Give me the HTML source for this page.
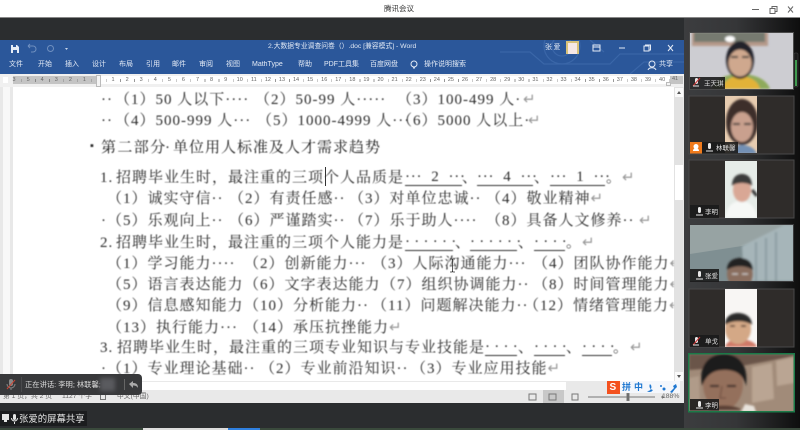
<!DOCTYPE html>
<html lang="zh"><head><meta charset="utf-8">
<style>
html,body{margin:0;padding:0;width:800px;height:430px;overflow:hidden;background:#fff}
body{position:relative;font-family:"Liberation Sans","Noto Sans CJK SC",sans-serif}
.a{position:absolute}
.t{position:absolute;white-space:nowrap;line-height:1}
#doc{position:absolute;left:0;top:0;width:674px;height:381px;overflow:hidden;filter:blur(.4px)}
#doc .t{font-family:"Liberation Serif","Noto Serif CJK SC",serif;font-size:15px;letter-spacing:1px;color:#2c2c2c}
#doc .u{text-align:center;height:15px;border-bottom:1px solid #333;letter-spacing:.75px}
#doc .v{letter-spacing:.25px}
#doc i{font-style:normal;color:#999}
.m{font-size:7px;color:#e4ebf6;top:61px;filter:blur(.25px)}
.rn{position:absolute;top:77px;display:flex;font-size:5.500px;color:#666;line-height:7px;filter:blur(.25px)}
.rn span{width:14.090px;text-align:center;flex:none}
</style></head><body>
<!-- title bar -->
<div class="a" style="left:0;top:0;width:800px;height:17px;background:#fff;border-bottom:1px solid #888"></div>
<div class="t" style="left:384px;top:5px;font-size:7.500px;color:#333;filter:blur(.25px)">腾讯会议</div>
<svg class="a" style="left:740px;top:3px" width="60" height="13" fill="none" stroke="#666" stroke-width="1"><path d="M12 6.500H19"/><path d="M30 5.500h5v5h-5zM32 5.500V3.500h5v5h-2"/><path d="M48 3.500l5 6M53 3.500l-5 6"/></svg>
<!-- dark -->
<div class="a" style="left:0;top:18px;width:684px;height:22px;background:#2b2d2f"></div>
<!-- word ribbon -->
<div class="a" style="left:0;top:40px;width:684px;height:34px;background:#2b579a"></div>
<svg class="a" style="left:500px;top:40px" width="184" height="34" fill="none" stroke="#3a66a8" stroke-width="1.200"><circle cx="62" cy="6" r="10"/><circle cx="62" cy="6" r="18"/><path d="M0 12H30L44 24H110L120 14H184M90 0l14 12M130 34l14-12H184"/></svg>
<svg class="a" style="left:10px;top:42px" width="60" height="14" fill="none"><path d="M1 3h6l2 2v6H1z" fill="#e6edf7"/><rect x="3" y="3" width="3" height="2" fill="#2b579a"/><rect x="3" y="8" width="4" height="3" fill="#2b579a"/><path d="M18 4h5a3 3 0 0 1 0 6h-2M18 4l2-2M18 4l2 2" stroke="#6f8fbf"/><circle cx="40.500" cy="6.500" r="3" stroke="#6f8fbf"/><path d="M55 6h3l-1.500 2z" fill="#c8d5ea"/></svg>
<div class="t" style="left:268px;top:44px;font-size:6.800px;color:#dfe7f3;filter:blur(.25px)">2.大数据专业调查问卷（）.doc [兼容模式] - Word</div>
<div class="t" style="left:545px;top:44px;font-size:7px;letter-spacing:1.500px;color:#dfe7f3;filter:blur(.25px)">张爱</div>
<div class="a" style="left:566px;top:41px;width:13px;height:13px;background:#d8c27a"><div class="a" style="left:2px;top:2px;width:9px;height:11px;background:#f6e8e6"></div></div>
<svg class="a" style="left:590px;top:42px" width="90" height="12" fill="none" stroke="#e4ebf6"><path d="M3 3h7v6H3zM3 5h7"/><path d="M29 6h6"/><path d="M54 4h5v5h-5zM55.500 4V3h5v5h-1"/><path d="M78 3l5 6M83 3l-5 6"/></svg>
<div class="t m" style="left:9px">文件</div><div class="t m" style="left:38px">开始</div><div class="t m" style="left:65px">插入</div><div class="t m" style="left:92px">设计</div><div class="t m" style="left:119px">布局</div><div class="t m" style="left:146px">引用</div><div class="t m" style="left:172px">邮件</div><div class="t m" style="left:199px">审阅</div><div class="t m" style="left:226px">视图</div><div class="t m" style="left:252px">MathType</div><div class="t m" style="left:298px">帮助</div><div class="t m" style="left:324px">PDF工具集</div><div class="t m" style="left:370px">百度网盘</div><div class="t m" style="left:424px">操作说明搜索</div><div class="t m" style="left:659px">共享</div>
<svg class="a" style="left:410px;top:60px" width="10" height="11" fill="none" stroke="#e4ebf6"><circle cx="4" cy="4" r="3"/><path d="M3 8h2"/></svg>
<svg class="a" style="left:647px;top:60px" width="11" height="11" fill="none" stroke="#e4ebf6"><circle cx="5" cy="4" r="3"/><path d="M1 10c1-3 7-3 8 0"/></svg>
<!-- ruler -->
<div class="a" style="left:0;top:74px;width:684px;height:13px;background:#f0f0f0"></div>
<div class="a" style="left:3px;top:77px;width:5px;height:6px;background:#fff"></div>
<div class="a" style="left:13px;top:76px;width:86px;height:8px;background:#c4c4c4"></div>
<div class="a" style="left:99px;top:76px;width:571px;height:8px;background:#fff"></div>
<div class="a" style="left:670px;top:76px;width:13px;height:8px;background:#c4c4c4"></div>
<div class="a" style="left:21px;top:79px;width:78px;height:3px;background:repeating-linear-gradient(90deg,#888 0 .7px,transparent .7px 14.090px)"></div>
<div class="a" style="left:106px;top:79px;width:564px;height:3px;background:repeating-linear-gradient(90deg,#999 0 .7px,transparent .7px 14.090px)"></div>
<div class="rn" style="left:7px"><span>3</span><span>5</span><span>4</span><span>3</span><span>2</span><span>1</span></div>
<div class="rn" style="left:106px"><span>1</span><span>2</span><span>3</span><span>4</span><span>5</span><span>6</span><span>7</span><span>8</span><span>9</span><span>10</span><span>11</span><span>12</span><span>13</span><span>14</span><span>15</span><span>16</span><span>17</span><span>18</span><span>19</span><span>20</span><span>21</span><span>22</span><span>23</span><span>24</span><span>25</span><span>26</span><span>27</span><span>28</span><span>29</span><span>30</span><span>31</span><span>32</span><span>33</span><span>34</span><span>35</span><span>36</span><span>37</span><span>38</span><span>39</span><span>40</span></div>
<div class="t" style="left:672px;top:77px;font-size:5.500px;color:#666">41</div>
<div class="a" style="left:96px;top:75px;width:5px;height:12px;background:#f4f4f4;border:1px solid #bbb;box-sizing:border-box"></div>
<div class="a" style="left:666px;top:82px;width:5px;height:4px;background:#f4f4f4;border:1px solid #bbb;box-sizing:border-box"></div>
<!-- doc -->
<div class="a" style="left:0;top:87px;width:684px;height:294px;background:#e8e8e8"></div>
<div class="a" style="left:13px;top:87px;width:661px;height:294px;background:#fff"></div>
<div class="a" style="left:3px;top:87px;width:7px;height:294px;background:#f8f8f8"></div>
<div class="a" style="left:674px;top:87px;width:9px;height:294px;background:#e2e2e2"></div>
<div class="a" style="left:675px;top:88px;width:8px;height:9px;background:#fafafa"></div>
<div class="a" style="left:676.500px;top:91px;width:0;height:0;border:2.500px solid transparent;border-bottom:3px solid #555;border-top:0"></div>
<div class="a" style="left:675px;top:165px;width:8px;height:35px;background:#fff"></div>
<div class="a" style="left:675px;top:372px;width:8px;height:9px;background:#fafafa"></div>
<div class="a" style="left:676.500px;top:375px;width:0;height:0;border:2.500px solid transparent;border-top:3px solid #555;border-bottom:0"></div>
<div id="doc">
<!-- L1 -->
<div class="t" style="left:101px;top:93px">··</div><div class="t" style="left:115px;top:93px">（1）50 人以下····</div><div class="t" style="left:255px;top:93px">（2）50-99 人·····</div><div class="t" style="left:397px;top:93px">（3）100-499 人·</div><div class="t" style="left:523px;top:93px"><i>↵</i></div>
<!-- L2 -->
<div class="t" style="left:101px;top:114px">··</div><div class="t" style="left:115px;top:114px">（4）500-999 人···</div><div class="t" style="left:257px;top:114px">（5）1000-4999 人···</div><div class="t" style="left:397px;top:114px">（6）5000 人以上·</div><div class="t" style="left:528px;top:114px"><i>↵</i></div>
<!-- L3 -->
<div class="t" style="left:90px;top:141px;font-size:11px">▪</div><div class="t" style="left:101px;top:141px;letter-spacing:1.400px;color:#1c1c1c">第二部分</div><div class="t" style="left:165px;top:141px">·</div><div class="t" style="left:173px;top:141px;color:#1c1c1c">单位用人标准及人才需求趋势</div>
<!-- L4 -->
<div class="t" style="left:100px;top:171px">1.</div><div class="t" style="left:116px;top:171px">招聘毕业生时，最注重的三项个人品质是</div>
<div class="t u" style="left:405px;top:170px;width:57px">···&nbsp;&nbsp;2&nbsp;&nbsp;···</div><div class="t" style="left:462px;top:171px">、</div>
<div class="t u" style="left:477px;top:170px;width:56px">···&nbsp;&nbsp;4&nbsp;&nbsp;···</div><div class="t" style="left:534px;top:171px">、</div>
<div class="t u" style="left:550px;top:170px;width:55px">···&nbsp;&nbsp;1&nbsp;&nbsp;···</div><div class="t" style="left:606px;top:171px">。</div><div class="t" style="left:622px;top:171px"><i>↵</i></div>
<!-- L5 -->
<div class="t" style="left:107px;top:192px">（1）诚实守信··</div><div class="t" style="left:229px;top:192px">（2）有责任感··</div><div class="t" style="left:349px;top:192px">（3）对单位忠诚··</div><div class="t" style="left:486px;top:192px">（4）敬业精神<i>↵</i></div>
<!-- L6 -->
<div class="t" style="left:101px;top:214px">·</div><div class="t" style="left:107px;top:214px">（5）乐观向上··</div><div class="t" style="left:229px;top:214px">（6）严谨踏实··</div><div class="t" style="left:349px;top:214px">（7）乐于助人····</div><div class="t" style="left:486px;top:214px">（8）具备人文修养··</div><div class="t" style="left:639px;top:214px"><i>↵</i></div>
<!-- L7 -->
<div class="t" style="left:100px;top:236px">2.</div><div class="t" style="left:116px;top:236px">招聘毕业生时，最注重的三项个人能力是</div>
<div class="t u v" style="left:405px;top:235px;width:48px">· · · · · ·</div><div class="t" style="left:455px;top:236px">、</div>
<div class="t u v" style="left:470px;top:235px;width:47px">· · · · · ·</div><div class="t" style="left:518px;top:236px">、</div>
<div class="t u v" style="left:534px;top:235px;width:31px">· · · ·</div><div class="t" style="left:566px;top:236px">。</div><div class="t" style="left:582px;top:236px"><i>↵</i></div>
<!-- L8 -->
<div class="t" style="left:107px;top:257px">（1）学习能力····</div><div class="t" style="left:244px;top:257px">（2）创新能力···</div><div class="t" style="left:372px;top:257px">（3）人际沟通能力···</div><div class="t" style="left:533px;top:257px">（4）团队协作能力<i>↵</i></div>
<!-- L9 -->
<div class="t" style="left:107px;top:278px">（5）语言表达能力</div><div class="t" style="left:244px;top:278px">（6）文字表达能力</div><div class="t" style="left:381px;top:278px">（7）组织协调能力··</div><div class="t" style="left:533px;top:278px">（8）时间管理能力<i>↵</i></div>
<!-- L10 -->
<div class="t" style="left:107px;top:299px">（9）信息感知能力</div><div class="t" style="left:244px;top:299px">（10）分析能力··</div><div class="t" style="left:372px;top:299px">（11）问题解决能力··</div><div class="t" style="left:524px;top:299px">（12）情绪管理能力<i>↵</i></div>
<!-- L11 -->
<div class="t" style="left:107px;top:321px">（13）执行能力···</div><div class="t" style="left:244px;top:321px">（14）承压抗挫能力<i>↵</i></div>
<!-- L12 -->
<div class="t" style="left:100px;top:341px">3.</div><div class="t" style="left:117px;top:341px">招聘毕业生时，最注重的三项专业知识与专业技能是</div>
<div class="t u v" style="left:485px;top:340px;width:32px">· · · ·</div><div class="t" style="left:518px;top:341px">、</div>
<div class="t u v" style="left:534px;top:340px;width:31px">· · · ·</div><div class="t" style="left:566px;top:341px">、</div>
<div class="t u v" style="left:582px;top:340px;width:30px">· · · ·</div><div class="t" style="left:613px;top:341px">。</div><div class="t" style="left:630px;top:341px"><i>↵</i></div>
<!-- L13 -->
<div class="t" style="left:101px;top:362px">·</div><div class="t" style="left:107px;top:362px">（1）专业理论基础··</div><div class="t" style="left:260px;top:362px">（2）专业前沿知识··</div><div class="t" style="left:411px;top:362px">（3）专业应用技能<i>↵</i></div>
</div>
<div class="a" style="left:325px;top:167px;width:1px;height:19px;background:#333"></div>
<!-- I-beam -->
<svg class="a" style="left:449px;top:258px" width="7" height="15" fill="none" stroke="#333" stroke-width=".8"><path d="M1 1h2l.5 1 .5-1h2M3.500 2v11M1 14h2l.5-1 .5 1h2"/></svg>
<!-- status -->
<div class="a" style="left:0;top:381px;width:684px;height:22px;background:#e9e9e9"></div>
<div class="a" style="left:13px;top:382px;width:553px;height:8px;background:#fff"></div>
<div class="t" style="left:3px;top:394px;font-size:6.800px;color:#666;filter:blur(.3px)">第 1 页，共 2 页</div><div class="t" style="left:62px;top:394px;font-size:6.800px;color:#666;filter:blur(.3px)">1127 个字</div><div class="t" style="left:117px;top:394px;font-size:6.800px;color:#666;filter:blur(.3px)">中文(中国)</div>
<div class="a" style="left:100px;top:394px;width:6px;height:6px;border:1px solid #777;box-sizing:border-box"></div>
<div class="a" style="left:543px;top:390px;width:21px;height:13px;background:#c8c8c8"></div>
<svg class="a" style="left:528px;top:392px" width="150" height="10" fill="none" stroke="#777"><rect x="1" y="2" width="7" height="6"/><rect x="21" y="2" width="7" height="6"/><rect x="44" y="2" width="6" height="6"/><path d="M60 5H127M133 5h3M134.500 3.500v3"/><rect x="99" y="1.500" width="2" height="7" fill="#666"/></svg>
<div class="t" style="left:662px;top:394px;font-size:6.800px;color:#666">188%</div>
<!-- sogou bar -->
<div class="a" style="left:607px;top:381px;width:73px;height:12px;background:#f4f7fc"></div>
<div class="a" style="left:607px;top:381px;width:13px;height:13px;background:#f4511e"><span class="t" style="left:2.500px;top:1.500px;font-size:10px;font-weight:bold;color:#fff">S</span></div>
<div class="t" style="left:622px;top:383px;font-size:9px;font-weight:bold;color:#1f78d1;letter-spacing:3px">拼中</div>
<svg class="a" style="left:645px;top:383px" width="38" height="10" fill="#1f78d1"><path d="M5 1a4 4 0 0 1-3 7 4 4 0 0 0 6-1 4 4 0 0 1-3-6z"/><circle cx="16" cy="3" r="1"/><circle cx="19" cy="6" r="1.500"/><path d="M25 9l4-4-1-2 3-2 1 3-2 2-3 4z"/></svg>
<!-- bottom dark -->
<div class="a" style="left:0;top:403px;width:684px;height:25px;background:#2b2d2f"></div>
<div class="a" style="left:0;top:428px;width:800px;height:2px;background:#3a4a3c"></div>
<div class="a" style="left:143px;top:428px;width:85px;height:2px;background:#ddd"></div>
<div class="a" style="left:228px;top:428px;width:32px;height:2px;background:#2f80e0"></div>
<!-- speaker toast -->
<div class="a" style="left:0;top:374px;width:142px;height:21px;background:#38393b;border-radius:0 4px 4px 0"></div>
<svg class="a" style="left:4px;top:378px" width="14" height="13" fill="none"><rect x="5" y="1" width="4" height="7" rx="2" fill="#888"/><path d="M3 6a4 4 0 0 0 8 0M7 10v2" stroke="#888"/><path d="M3 11L11 2" stroke="#c43"/></svg>
<div class="a" style="left:21px;top:377px;width:1px;height:15px;background:#4a4b4d"></div>
<div class="t" style="left:25px;top:381px;font-size:7.300px;color:#ddd;filter:blur(.25px)">正在讲话: 李明; 林联馨;</div>
<div class="a" style="left:100px;top:378px;width:15px;height:13px;background:#5a5b5f;filter:blur(2px)"></div>
<div class="a" style="left:124px;top:379px;width:1px;height:11px;background:#666"></div>
<svg class="a" style="left:128px;top:380px" width="11" height="9" fill="#aaa"><path d="M1 4l4-3v2c3 0 5 1 5 5-1-2-3-2.500-5-2.500V8z"/></svg>
<!-- screen share label -->
<div class="a" style="left:0;top:411px;width:87px;height:15px;background:#1b1c1e"></div>
<svg class="a" style="left:1px;top:413px" width="18" height="12" fill="#e6e6e6"><path d="M1 1h7v6H6v2H3V7H1z"/><rect x="12" y="1" width="3" height="6" rx="1.500"/><path d="M10 5a3.500 3.500 0 0 0 7 0h-1a2.500 2.500 0 0 1-5 0zM13 9h1v2h-1z"/></svg>
<div class="t" style="left:19px;top:414px;font-size:9.400px;color:#e6e6e6;filter:blur(.2px)">张爱的屏幕共享</div>
<!-- right panel -->
<div class="a" style="left:684px;top:18px;width:116px;height:410px;background:linear-gradient(90deg,#3c3d3f 0%,#353638 45%,#0e0e0e 100%)"></div>
<svg class="a" style="left:684px;top:18px" width="116" height="410">
<defs><filter id="b"><feGaussianBlur stdDeviation="1"/></filter><clipPath id="c6"><rect x="5" y="336" width="105" height="57"/></clipPath><clipPath id="c4"><rect x="6" y="207" width="103" height="56"/></clipPath><clipPath id="c1"><rect x="6" y="15" width="103" height="56"/></clipPath><clipPath id="c2"><rect x="41" y="78" width="32" height="57"/></clipPath><clipPath id="c3"><rect x="41" y="143" width="32" height="57"/></clipPath><clipPath id="c5"><rect x="41" y="271" width="32" height="58"/></clipPath></defs>
<rect x="110" y="35" width="4" height="34" rx="1" fill="#1a1a1a" stroke="#444" stroke-width=".5"/><rect x="111" y="42" width="2" height="26" fill="#3f9a4f"/>
<!-- tile 1 -->
<rect x="5" y="14" width="105" height="58" fill="#4a4a4a"/>
<g clip-path="url(#c1)"><rect x="6" y="15" width="103" height="56" fill="#cdcdd2"/>
<g filter="url(#b)"><rect x="8" y="14" width="76" height="14" fill="#b5998a"/><rect x="10" y="14" width="71" height="10" fill="#767a70"/><ellipse cx="46" cy="21" rx="5" ry="3" fill="#fff"/>
<path d="M28 71c4-11 15-15 28-15s26 4 30 15z" fill="#8eaa5c"/><path d="M38 71c2-9 10-13 18-13s18 4 20 13z" fill="#e2b238"/>
<ellipse cx="56" cy="42" rx="14" ry="19" fill="#24242a"/><ellipse cx="56" cy="45" rx="11.500" ry="13.500" fill="#cfa88e"/><path d="M47 39h7M58 39h7" stroke="#3b3b38" stroke-width="2"/></g></g>
<!-- tile 2 -->
<rect x="5" y="78" width="105" height="58" fill="#2f2c2a" stroke="#494949"/>
<g clip-path="url(#c2)"><rect x="41" y="78" width="32" height="58" fill="#e7ccb0"/>
<g filter="url(#b)"><ellipse cx="58" cy="104" rx="16" ry="23" fill="#3e2f2a"/><ellipse cx="58" cy="109" rx="11" ry="15" fill="#c9a08e"/><path d="M49 106h7M60 106h7" stroke="#333" stroke-width="2"/><path d="M46 136c2-8 8-9 13-9s12 3 14 9z" fill="#7390b4"/></g></g>
<!-- tile 3 -->
<rect x="5" y="142" width="105" height="58" fill="#2f2c2a" stroke="#494949"/>
<g clip-path="url(#c3)"><rect x="41" y="143" width="32" height="57" fill="#e6ece8"/>
<g filter="url(#b)"><path d="M41 200c2-14 10-17 16-17s14 3 16 17z" fill="#f6f8f6"/><ellipse cx="58" cy="172" rx="9" ry="12" fill="#d9a795"/><path d="M48 168c0-9 5-12 10-12s10 3 10 12c-4-4-16-4-20 0z" fill="#3a3a3a"/><path d="M68 172l5 6" stroke="#333" stroke-width="3"/></g></g>
<!-- tile 4 -->
<rect x="5" y="206" width="105" height="58" fill="#3a3a3c"/>
<g clip-path="url(#c4)"><rect x="6" y="207" width="103" height="56" fill="#7f8f92"/><path d="M6 207h103v8L58 228l-52 8z" fill="#97a3a3"/><g filter="url(#b)"><path d="M58 228L100 207h10v56H60z" fill="#a6b5b9"/><path d="M72 224v39M82 220v43M92 214v49" stroke="#8b9ba0" stroke-width="2"/><ellipse cx="56" cy="256" rx="13" ry="15" fill="#8a6e5f"/><path d="M43 252c0-9 7-12 13-12s13 3 13 12c-7-5-19-5-26 0z" fill="#222"/><path d="M48 256h6M58 256h6" stroke="#ddd"/></g></g>
<!-- tile 5 -->
<rect x="5" y="271" width="105" height="58" fill="#2f2c2a" stroke="#494949"/>
<g clip-path="url(#c5)"><rect x="41" y="271" width="32" height="58" fill="#f8f6f4"/>
<g filter="url(#b)"><path d="M41 329c2-6 8-8 14-8s16 2 18 8z" fill="#d07a68"/><ellipse cx="54" cy="311" rx="13" ry="15" fill="#d4a886"/><path d="M41 307c0-9 7-12 13-12s14 3 14 12c-6-5-21-5-27 0z" fill="#2a2a2a"/><path d="M46 308h5M57 308h5" stroke="#3a2a20" stroke-width="1.500"/></g></g>
<!-- tile 6 -->
<g clip-path="url(#c6)"><rect x="5" y="336" width="105" height="57" fill="#a18b79"/><g filter="url(#b)"><path d="M5 336h105v2L58 348 5 352z" fill="#6a5548"/><path d="M68 349l20-4 2 36-22 4zM92 343l18-4v26l-17 3z" fill="#baa593"/><path d="M5 360l10-2 1 30-11 2z" fill="#b09b89"/><ellipse cx="39" cy="366" rx="20" ry="26" fill="#94705c"/><path d="M18 368c-4-22 8-32 22-32s25 10 22 32c-3-12-10-16-22-16s-18 6-22 16z" fill="#1e1c1c"/><path d="M26 368h9M43 368h9" stroke="#2a2222" stroke-width="2"/><path d="M38 368l-2 12h6" stroke="#6a4a3c" fill="none"/><path d="M25 392c3-6 25-6 33 0z" fill="#5a4036"/><path d="M57 394l4-8 9 2 2 6z" fill="#e9e4dd"/></g></g>
<rect x="4.750" y="335.750" width="105.500" height="58" fill="none" stroke="#1b7a48" stroke-width="1.500"/>
<!-- labels -->
<rect x="6" y="59" width="35" height="12" fill="#1b1b1b" opacity=".9"/>
<rect x="6" y="124" width="12" height="11.500" fill="#ef7a1c"/><path d="M9 133c0-4 6-4 6 0zM12 126a2.500 2.500 0 1 1-.01 0z" fill="#fff"/>
<rect x="18" y="124" width="36" height="11.500" fill="#1b1b1b" opacity=".9"/>
<rect x="6" y="187" width="29" height="13" fill="#1b1b1b" opacity=".9"/>
<rect x="6" y="251" width="29" height="13" fill="#1b1b1b" opacity=".9"/>
<rect x="6" y="317" width="29" height="12" fill="#1b1b1b" opacity=".9"/>
<rect x="6" y="381" width="29" height="11.500" fill="#1b1b1b" opacity=".9"/>
<g fill="#e8e8e8"><rect x="11" y="60" width="3" height="6" rx="1.500"/><rect x="24" y="125" width="3" height="6" rx="1.500"/><rect x="14" y="189" width="3" height="6" rx="1.500"/><rect x="14" y="253" width="3" height="6" rx="1.500"/><rect x="11" y="319" width="3" height="6" rx="1.500"/><rect x="14" y="383" width="3" height="6" rx="1.500"/></g>
<path d="M9 68l7-8M9 327l7-8" stroke="#c33" stroke-width="1"/>
<path d="M12 197h7M12 261h7M12 390h7M22 133h7M9 68h6M9 327h6" stroke="#e8e8e8"/>
<g fill="#e0e0e0" font-size="6.500" font-family="'Liberation Sans','Noto Sans CJK SC',sans-serif"><text x="20" y="67.500">王天琪</text><text x="32" y="132">林联馨</text><text x="21" y="196">李明</text><text x="21" y="260">张爱</text><text x="21" y="325.500">单戈</text><text x="21" y="389.500">李明</text></g>
</svg>
</body></html>
